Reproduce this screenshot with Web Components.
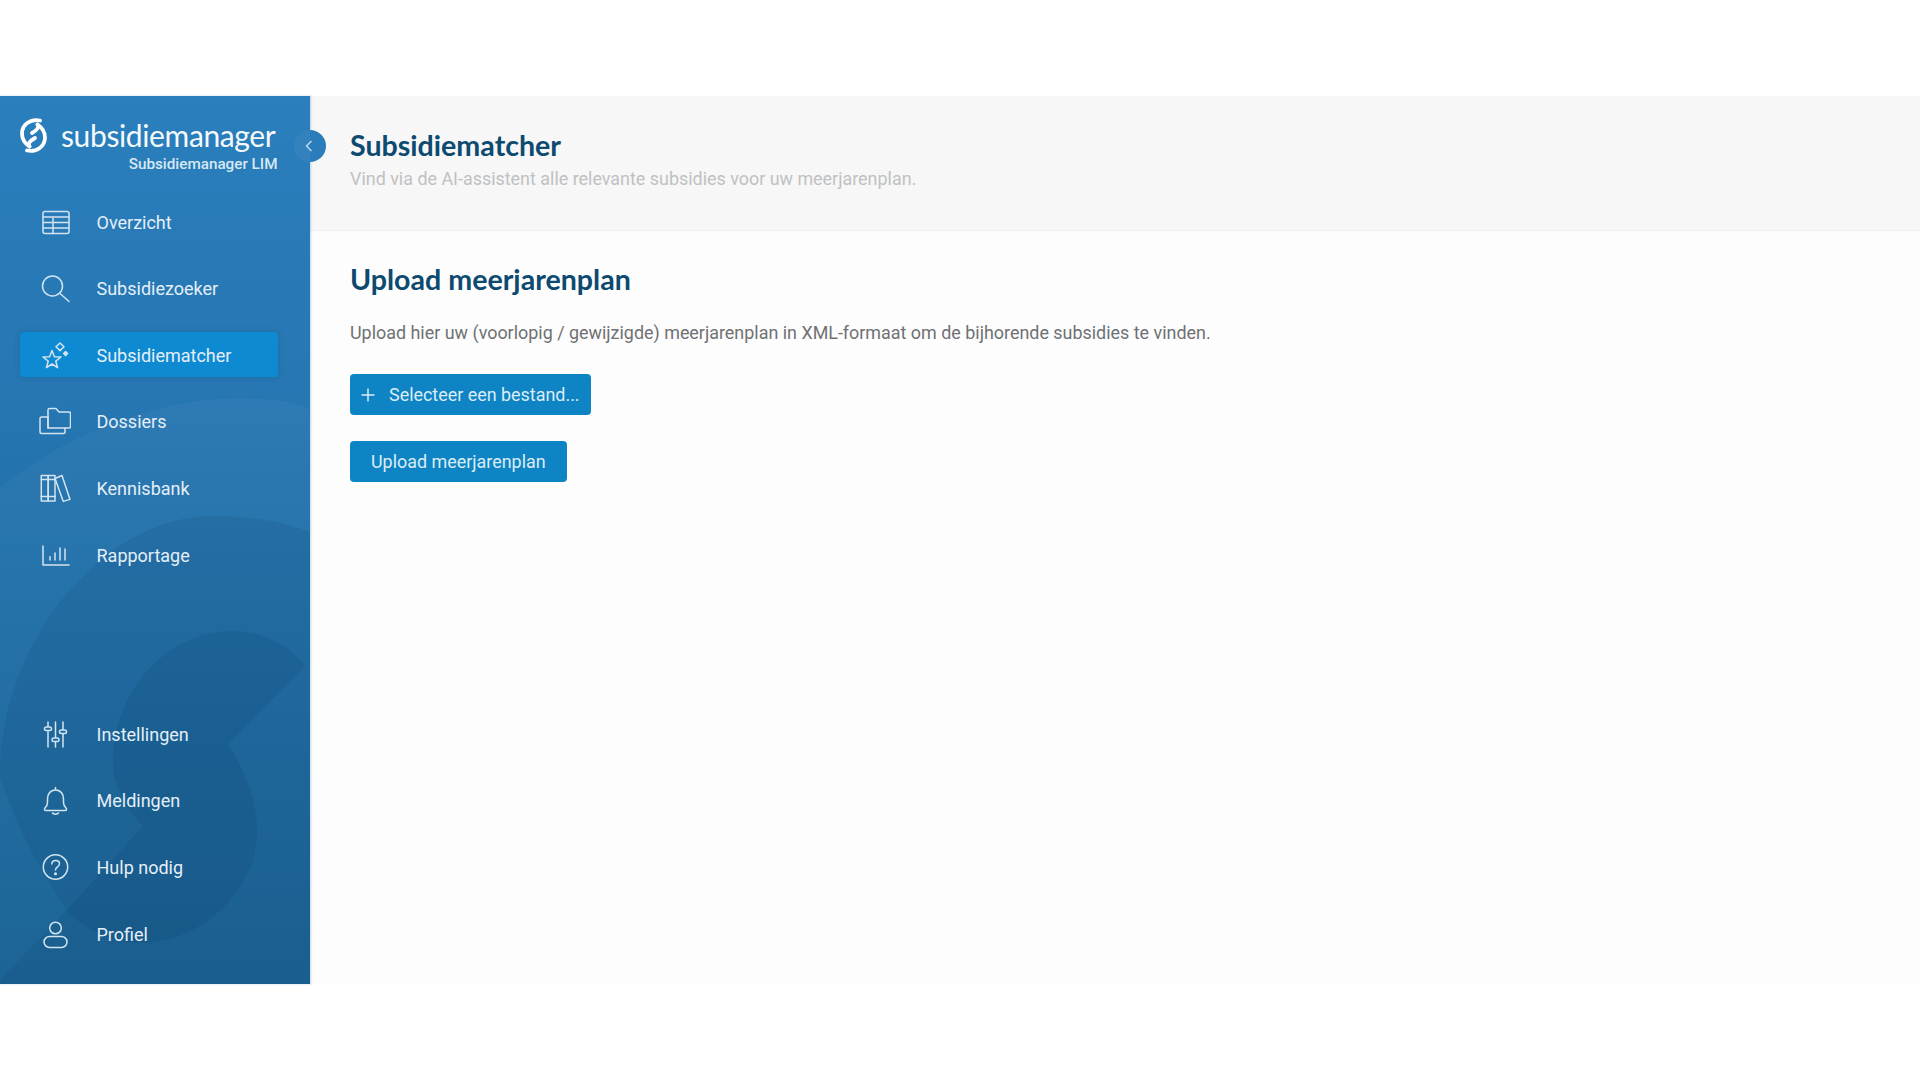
<!DOCTYPE html>
<html lang="nl">
<head>
<meta charset="utf-8">
<title>Subsidiematcher</title>
<style>
  html, body { margin: 0; padding: 0; background: #fff; }
  body { padding: 96px 0; font-family: Roboto, "Liberation Sans", sans-serif; }
</style>
</head>
<body>
<sm-app>
  <sm-sidebar slot="sidebar"></sm-sidebar>
  <sm-page-header title="Subsidiematcher" sub="Vind via de AI-assistent alle relevante subsidies voor uw meerjarenplan."></sm-page-header>
  <sm-upload></sm-upload>
</sm-app>

<script>
const ICONS = {
  overzicht: '<rect x="4" y="5.500" width="26" height="22" rx="2"/><path d="M4 11H30M4 16.500H30M4 22H30M14 11V27.500"/>',
  zoeker: '<circle cx="13.500" cy="14" r="10"/><path d="M21 21.500L30 29.500"/>',
  matcher: '<path d="M13 11.500L15.400 17.800L22 18L16.800 22.200L18.600 28.700L13 25L7.400 28.700L9.200 22.200L4 18L10.600 17.800Z"/><path d="M21 4L25 7.800L21 11.600L17 7.800Z"/><path d="M26.600 12.500L28.600 14.500L26.600 16.500L24.600 14.500Z" fill="currentColor"/>',
  dossiers: '<path d="M9 8V5A1.500 1.500 0 0 1 10.500 3.500H17L20 7H30A1.500 1.500 0 0 1 31.500 8.500V21.500A1.500 1.500 0 0 1 30 23H26"/><path d="M9 23H26V27A1.500 1.500 0 0 1 24.500 28.500H2.500A1.500 1.500 0 0 1 1 27V13.500A1.500 1.500 0 0 1 2.500 12H9V23"/><path d="M9 8V23"/>',
  kennisbank: '<rect x="2.300" y="3.500" width="6.900" height="25.500"/><rect x="9.200" y="3.500" width="6.800" height="25.500"/><path d="M2.300 7.500H16M2.300 24.500H16"/><path d="M16 6.500L23 3.500L31 27.400L24.300 29.400Z"/>',
  rapportage: '<path d="M4 7V26H30"/><path d="M11 21V17.700M16 21V14M21 21V9M26 21V10"/>',
  instellingen: '<path d="M9 4V29M16.500 4V29M24 4V29"/><rect x="5.500" y="9" width="7" height="3.500" rx="1.750" fill="var(--bg,#1a6aa0)"/><rect x="13" y="20" width="7" height="3.500" rx="1.750" fill="var(--bg,#1a6aa0)"/><rect x="20.500" y="12" width="7" height="3.500" rx="1.750" fill="var(--bg,#1a6aa0)"/>',
  meldingen: '<path d="M16.500 3.500V6M16.500 6C11 6 8.500 10.500 8.500 15V18.500C8.500 21 7 23 6 24C5 25.200 5.500 26.500 7 26.500H26C27.500 26.500 28 25.200 27 24C26 23 24.500 21 24.500 18.500V15C24.500 10.500 22 6 16.500 6Z"/><path d="M13.500 29C14.500 30.500 18.500 30.500 19.500 29"/>',
  hulp: '<circle cx="16.500" cy="16" r="12.200"/><path d="M12.800 13C13 10.800 14.500 9.500 16.700 9.500C19 9.500 20.500 11 20.500 12.800C20.500 15.800 16.500 15.800 16.500 19"/><circle cx="16.500" cy="22.800" r=".8" fill="currentColor"/>',
  profiel: '<circle cx="16.500" cy="10" r="5.800"/><rect x="5" y="18.500" width="23" height="11" rx="5.500"/>'
};

class SmApp extends HTMLElement {
  constructor() {
    super();
    this._root = this.attachShadow({ mode: 'open' });
    this._root.innerHTML = `
      <style>
        :host { display: flex; height: 888px; background: #fdfdfd; }
        .side { flex: 0 0 310px; display: flex; }
        main { flex: 1; min-width: 0; display: flex; flex-direction: column; }
      </style>
      <div class="side"><slot name="sidebar"></slot></div>
      <main><slot></slot></main>
    `;
  }
}

class SmNavItem extends HTMLElement {
  constructor() {
    super();
    this._root = this.attachShadow({ mode: 'open' });
  }
  connectedCallback() {
    const icon = ICONS[this.getAttribute('icon')] || '';
    this._root.innerHTML = `
      <style>
        :host {
          display: flex; align-items: center; gap: 25.500px;
          height: 45px; margin: 0 32px 0 20px; padding-left: 19px;
          border-radius: 4px; color: #e4eff7;
          font: 400 18px/1 Roboto, sans-serif;
        }
        :host([active]) { background: #0e8ad3; box-shadow: 0 0 6px rgba(10,60,100,.18); }
        .label { padding-top: 2px; }
        svg { width: 32px; height: 32px; flex: none; fill: none; stroke: #d3e4f0; stroke-width: 1.500; stroke-linecap: round; stroke-linejoin: round; color: #d3e4f0; }
      </style>
      <svg viewBox="0 0 32 32">${icon}</svg>
      <span class="label"><slot></slot></span>
    `;
  }
}

class SmSidebar extends HTMLElement {
  constructor() {
    super();
    this._root = this.attachShadow({ mode: 'open' });
    this._root.innerHTML = `
      <style>
        :host {
          display: flex; flex-direction: column; position: relative; width: 309.500px; height: 888px;
          box-sizing: border-box; padding-bottom: 28px;
          background: linear-gradient(180deg, #2a7fbc 0%, #2676b2 35%, #1d6ca5 60%, #145f92 100%);
          box-shadow: 1px 0 2px rgba(60,130,180,.3);
        }
        .mark { position: absolute; left: 0; top: 0; width: 310px; height: 888px; }
        .logo { position: relative; height: 103px; box-sizing: border-box; padding: 21px 32px 0 20px; color: #fff; }
        .logo-row { display: flex; align-items: center; gap: 14px; height: 36px; }
        .logo-row svg { width: 27px; height: 35px; flex: none; }
        .word { font: 400 30px/36px Lato, sans-serif; letter-spacing: -.37px; color: #f4f9fc; }
        .lim { text-align: right; font: 500 15.250px/18px Roboto, sans-serif; color: #d8e8f3; margin: 2px 0 0; }
        nav { position: relative; display: flex; flex-direction: column; gap: 21.670px; }
        .bottom { margin-top: auto; }
        .toggle {
          position: absolute; left: 293.500px; top: 34px; width: 32px; height: 32px; border-radius: 50%;
          background: linear-gradient(90deg, #3482bd 50%, #2a7dba 50%);
          display: flex; align-items: center; justify-content: center;
        }
        .toggle svg { width: 12px; height: 16px; fill: none; stroke: #bcd8ea; stroke-width: 1.500; margin-left: -1px; }
      </style>
      <svg class="mark" viewBox="0 96 310 888" aria-hidden="true">
        <path d="M0 487C70 432 160 398 240 398C270 398 295 402 310 409V984H0Z" fill="#fff" opacity=".035"/>
        <path d="M0 775C0 640 105 516 212 516C250 516 285 522 310 532V984H0V980L67 910C40 870 15 825 0 775Z" fill="#083a66" opacity=".12"/>
        <path d="M113 762C113 690 168 631 232 631C262 631 290 645 305 666L228 744C248 775 257 805 257 830C257 892 200 943 140 943C112 943 85 930 67 910L143 826C125 808 113 785 113 762Z" fill="#083a66" opacity=".14"/>
      </svg>
      <div class="logo">
        <div class="logo-row">
          <svg viewBox="0 0 27 35" fill="none" stroke="#fff" stroke-width="3.800" stroke-linecap="round">
            <path d="M20 2.500C10 .5 2 7 2 15.500C2 21 5 25.500 9.500 28.500"/>
            <path d="M7 32.500C17 34.500 25 28 25 19.500C25 14 22 9.500 17.500 6.500"/>
            <path d="M17.500 6.500C19.500 9.500 17 12 12 15"/>
            <path d="M9.500 28.500C7.500 25.500 10 23 15 20"/>
          </svg>
          <span class="word">subsidiemanager</span>
        </div>
        <div class="lim">Subsidiemanager LIM</div>
      </div>
      <nav>
        <sm-nav-item icon="overzicht">Overzicht</sm-nav-item>
        <sm-nav-item icon="zoeker">Subsidiezoeker</sm-nav-item>
        <sm-nav-item icon="matcher" active>Subsidiematcher</sm-nav-item>
        <sm-nav-item icon="dossiers">Dossiers</sm-nav-item>
        <sm-nav-item icon="kennisbank">Kennisbank</sm-nav-item>
        <sm-nav-item icon="rapportage">Rapportage</sm-nav-item>
      </nav>
      <nav class="bottom">
        <sm-nav-item icon="instellingen">Instellingen</sm-nav-item>
        <sm-nav-item icon="meldingen">Meldingen</sm-nav-item>
        <sm-nav-item icon="hulp">Hulp nodig</sm-nav-item>
        <sm-nav-item icon="profiel">Profiel</sm-nav-item>
      </nav>
      <div class="toggle"><svg viewBox="0 0 12 16"><path d="M8.500 3L3.500 8L8.500 13"/></svg></div>
    `;
  }
}

class SmPageHeader extends HTMLElement {
  constructor() {
    super();
    this._root = this.attachShadow({ mode: 'open' });
  }
  connectedCallback() {
    this._root.innerHTML = `
      <style>
        :host { display: block; height: 135px; box-sizing: border-box; padding: 29px 40px 0; background: #f7f7f7; border-bottom: 1px solid #f0f0f0; }
        h1 { margin: 0; font: 700 28.600px/40px Lato, sans-serif; color: #0d4a70; }
        p { margin: 0; padding-top: 2px; font: 400 17.920px/24px Roboto, sans-serif; color: #bfc1c2; }
      </style>
      <h1>${this.getAttribute('title')}</h1>
      <p>${this.getAttribute('sub')}</p>
    `;
  }
}

class SmButton extends HTMLElement {
  constructor() {
    super();
    this._root = this.attachShadow({ mode: 'open' });
    this._root.innerHTML = `
      <style>
        :host {
          display: inline-flex; align-items: center; height: 41px; box-sizing: border-box; padding: 0 21px;
          background: #0e84c4; color: #dcecf6; border-radius: 4px;
          font: 400 17.920px/1 Roboto, sans-serif; white-space: nowrap;
        }
        :host([plus]) { padding: 0 11px; gap: 14px; }
        svg { display: none; width: 14px; height: 14px; fill: none; stroke: #dcecf6; stroke-width: 1.500; }
        :host([plus]) svg { display: block; }
      </style>
      <svg viewBox="0 0 14 14"><path d="M7 .5V13.500M.5 7H13.500"/></svg>
      <slot></slot>
    `;
  }
}

class SmUpload extends HTMLElement {
  constructor() {
    super();
    this._root = this.attachShadow({ mode: 'open' });
    this._root.innerHTML = `
      <style>
        :host { display: block; flex: 1; padding: 28px 40px 0; }
        h2 { margin: 0; font: 700 28.600px/40px Lato, sans-serif; color: #0d4a70; }
        p { margin: 0; padding-top: 22px; font: 400 17.920px/24px Roboto, sans-serif; color: #6f7173; }
        .actions { display: flex; flex-direction: column; align-items: flex-start; gap: 26px; margin-top: 29px; }
      </style>
      <h2>Upload meerjarenplan</h2>
      <p>Upload hier uw (voorlopig / gewijzigde) meerjarenplan in XML-formaat om de bijhorende subsidies te vinden.</p>
      <div class="actions">
        <sm-button plus>Selecteer een bestand...</sm-button>
        <sm-button>Upload meerjarenplan</sm-button>
      </div>
    `;
  }
}

customElements.define('sm-nav-item', SmNavItem);
customElements.define('sm-sidebar', SmSidebar);
customElements.define('sm-page-header', SmPageHeader);
customElements.define('sm-button', SmButton);
customElements.define('sm-upload', SmUpload);
customElements.define('sm-app', SmApp);
</script>
</body>
</html>
